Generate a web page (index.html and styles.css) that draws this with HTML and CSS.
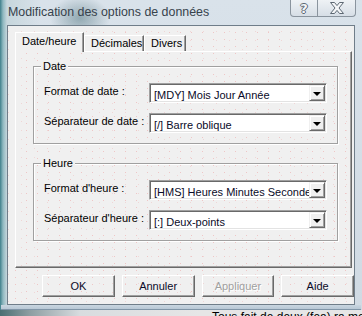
FILE: index.html
```html
<!DOCTYPE html>
<html lang="fr">
<head>
<meta charset="utf-8">
<title>Modification des options de données</title>
<link rel="stylesheet" href="styles.css">
</head>
<body>
<div class="window">
  <div class="titlebar">
    <div class="title">Modification des options de données</div>
    <div class="tbtns">
      <div class="tbtn help">?</div>
      <div class="tbtn close">
        <svg width="16" height="12" viewBox="0 0 16 12"><path d="M1.5 0.5 H5.5 L8 3.6 L10.5 0.5 H14.5 L10 6 L14.5 11.5 H10.5 L8 8.4 L5.5 11.5 H1.5 L6 6 Z" fill="#f4f6f8" stroke="#5d6873" stroke-width="1"/></svg>
      </div>
    </div>
  </div>
  <div class="client">
    <div class="tabs">
      <div class="tab sel">Date/heure</div>
      <div class="tab dec">Décimales</div>
      <div class="tab div">Divers</div>
    </div>
    <div class="panel">
      <div class="group">
        <span class="legend">Date</span>
        <div class="row">
          <span class="lbl">Format de date :</span>
          <div class="combo"><span class="val">[MDY] Mois Jour Année</span><span class="drop"><span class="tri"></span></span></div>
        </div>
        <div class="row">
          <span class="lbl">Séparateur de date :</span>
          <div class="combo"><span class="val">[/] Barre oblique</span><span class="drop"><span class="tri"></span></span></div>
        </div>
      </div>
      <div class="group">
        <span class="legend">Heure</span>
        <div class="row">
          <span class="lbl">Format d'heure :</span>
          <div class="combo"><span class="val">[HMS] Heures Minutes Secondes</span><span class="drop"><span class="tri"></span></span></div>
        </div>
        <div class="row">
          <span class="lbl">Séparateur d'heure :</span>
          <div class="combo"><span class="val">[:] Deux-points</span><span class="drop"><span class="tri"></span></span></div>
        </div>
      </div>
    </div>
    <div class="buttons">
      <div class="btn">OK</div>
      <div class="btn">Annuler</div>
      <div class="btn disabled">Appliquer</div>
      <div class="btn">Aide</div>
    </div>
  </div>
  <div class="fbottom"></div>
  <div class="below"><span>Tous fait de deux (fea) ra mettrel</span></div>
</div>
</body>
</html>
```

FILE: styles.css
```css
html, body {
  margin: 0;
  padding: 0;
}
body {
  width: 362px;
  height: 316px;
  overflow: hidden;
  font-family: "Liberation Sans", Arial, sans-serif;
  font-size: 11px;
  color: #000;
}
.window {
  width: 362px;
  height: 316px;
  display: flex;
  flex-direction: column;
  background:
    radial-gradient(ellipse 30px 22px at 80px 18px, rgba(60, 100, 110, 0.45), transparent),
    linear-gradient(to right, #3f7f8a 0, #8fb8c0 3px, #c6d6dc 7px, rgba(210, 221, 230, 0) 40px),
    linear-gradient(to bottom, #d9e2ea 0, #d0dae3 100%);
}
.titlebar {
  height: 25px;
  display: flex;
  align-items: flex-start;
  flex: none;
}
.title {
  flex: 1;
  padding: 5px 0 0 8px;
  font-size: 12.4px;
  color: #37424c;
  white-space: nowrap;
}
.tbtns {
  display: flex;
  margin-right: 6px;
}
.tbtn {
  height: 17px;
  box-sizing: border-box;
  border: 1px solid #8a949e;
  border-top: none;
  background: linear-gradient(to bottom, #eef2f5, #d6dee6);
  display: flex;
  align-items: center;
  justify-content: center;
}
.help {
  width: 28px;
  border-radius: 0 0 0 4px;
  font-family: "DejaVu Sans", sans-serif;
  font-weight: bold;
  font-size: 13px;
  color: #f4f6f8;
  text-shadow: 1px 0 #5d6873, -1px 0 #5d6873, 0 1px #5d6873, 0 -1px #5d6873;
  line-height: 15px;
}
.close {
  width: 38px;
  border-left: none;
  border-radius: 0 0 4px 0;
}
.client {
  margin: 0 7px;
  height: 280px;
  flex: none;
  box-sizing: border-box;
  border: 1px solid #6f7d89;
  background-color: #f0f0f0;
  background-image:
    radial-gradient(circle, rgba(235, 120, 120, 0.35) 0.6px, transparent 1px),
    radial-gradient(circle, rgba(235, 140, 140, 0.25) 0.6px, transparent 1px);
  background-size: 11px 7px, 13px 9px;
  background-position: 2px 3px, 7px 1px;
  padding: 6px 0 0 7px;
}
.tabs {
  display: flex;
  align-items: flex-end;
  height: 19px;
}
.tab {
  box-sizing: border-box;
  height: 16px;
  border-top: 1px solid #fff;
  border-left: 1px solid #fff;
  border-right: 1px solid #696969;
  box-shadow: inset -1px 0 #a0a0a0;
  padding: 1px 0 0 6px;
  background: #f0f0f0;
}
.tab.sel {
  position: relative;
  z-index: 1;
  width: 69px;
  height: 20px;
  margin-bottom: -1px;
  padding: 2px 0 0 6px;
}
.tab.dec {
  width: 60px;
}
.tab.div {
  width: 42px;
}
.panel {
  box-sizing: border-box;
  width: 337px;
  height: 217px;
  border-top: 1px solid #fff;
  border-left: 1px solid #fff;
  border-right: 1px solid #696969;
  border-bottom: 1px solid #696969;
  box-shadow: inset -1px -1px #a0a0a0;
  padding: 14px 0 0 17px;
  display: flex;
  flex-direction: column;
  gap: 19px;
}
.group {
  position: relative;
  box-sizing: border-box;
  width: 305px;
  height: 78px;
  border: 1px solid #a0a0a0;
  box-shadow: inset 1px 1px #fff, 1px 1px #fff;
  padding: 16px 0 0 10px;
  display: flex;
  flex-direction: column;
  gap: 10px;
}
.legend {
  position: absolute;
  top: -8px;
  left: 7px;
  padding: 0 2px;
  background: #f0f0f0;
  line-height: 14px;
}
.row {
  display: flex;
  align-items: flex-start;
  height: 20px;
}
.lbl {
  width: 105px;
  flex: none;
  line-height: 14px;
  padding-top: 1px;
}
.combo {
  box-sizing: border-box;
  width: 178px;
  height: 20px;
  background: #fff;
  border-top: 1px solid #a0a0a0;
  border-left: 1px solid #a0a0a0;
  border-right: 1px solid #fff;
  border-bottom: 1px solid #fff;
  box-shadow: inset 1px 1px #696969, inset -1px -1px #e3e3e3;
  display: flex;
  align-items: center;
  padding: 1px 1px 1px 4px;
}
.val {
  flex: 1;
  overflow: hidden;
  white-space: nowrap;
  padding-top: 3px;
  color: #0a0a28;
}
.drop {
  flex: none;
  box-sizing: border-box;
  width: 16px;
  height: 16px;
  background: #f0f0f0;
  border-top: 1px solid #f0f0f0;
  border-left: 1px solid #f0f0f0;
  border-right: 1px solid #696969;
  border-bottom: 1px solid #696969;
  box-shadow: inset 1px 1px #fff, inset -1px -1px #a0a0a0;
  display: flex;
  align-items: center;
  justify-content: center;
}
.tri {
  width: 0;
  height: 0;
  border-left: 4px solid transparent;
  border-right: 4px solid transparent;
  border-top: 4px solid #000;
  margin-top: 1px;
}
.buttons {
  display: flex;
  gap: 7px;
  margin-top: 7px;
  padding-left: 27px;
}
.btn {
  box-sizing: border-box;
  width: 74px;
  height: 22px;
  border-top: 1px solid #fff;
  border-left: 1px solid #fff;
  border-right: 1px solid #696969;
  border-bottom: 1px solid #696969;
  box-shadow: inset -1px -1px #a0a0a0;
  display: flex;
  align-items: center;
  justify-content: center;
  font-size: 11px;
  color: #0a0a28;
}
.btn.disabled {
  color: #a0a0a0;
  text-shadow: 1px 1px #fff;
}
.fbottom {
  height: 4px;
  flex: none;
  background: linear-gradient(to bottom, #c9d6e0, #b8c8d5);
  margin: 0 1px;
  border-bottom: 1px solid #8196a8;
}
.below {
  flex: 1;
  background: linear-gradient(to right, #4a6f72 0, #8e9ea2 30px, #d8dcdf 80px, #e6e6e6 200px);
  overflow: hidden;
  padding-left: 212px;
  font-size: 12px;
  line-height: 14px;
  white-space: nowrap;
}
```
